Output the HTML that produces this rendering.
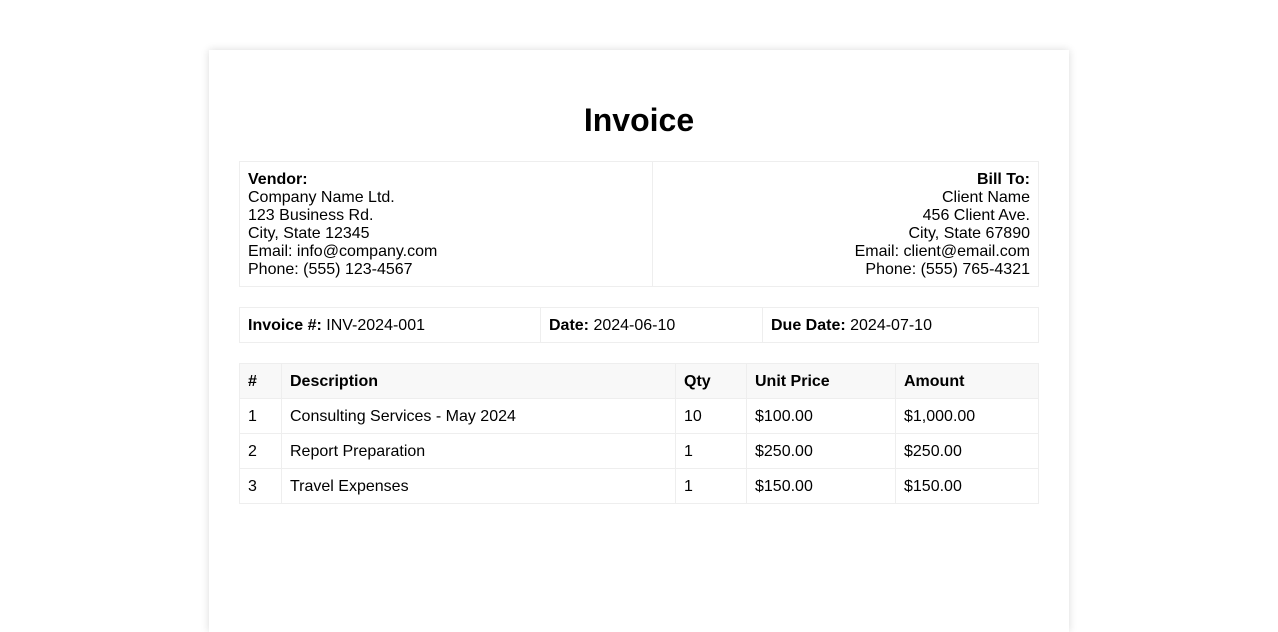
<!DOCTYPE html>
<html><head><meta charset="utf-8"><style>
html,body{margin:0;height:501px;overflow:hidden;}
body{background:#fff;font-family:"Liberation Sans",Arial,sans-serif;font-size:16px;color:#000;}
.card{position:absolute;left:209px;top:50px;width:800px;padding:52px 30px 30px;background:#fff;box-shadow:0 0 8px rgba(0,0,0,0.15);height:500px;}
h1{margin:0 0 22px;text-align:center;font-size:32px;line-height:37px;}
table{border-collapse:collapse;width:800px;line-height:18px;}
td,th{border:1px solid #eee;padding:9px 8px 7px;text-align:left;vertical-align:top;}
.meta{margin-top:20px;}
.items{margin-top:20px;}
.items th{background:#f8f8f8;font-weight:bold;}
</style></head><body>
<div class="card">
<h1>Invoice</h1>
<table><tr>
<td style="width:396px"><b>Vendor:</b><br>Company Name Ltd.<br>123 Business Rd.<br>City, State 12345<br>Email: info@company.com<br>Phone: (555) 123-4567</td>
<td style="text-align:right"><b>Bill To:</b><br>Client Name<br>456 Client Ave.<br>City, State 67890<br>Email: client@email.com<br>Phone: (555) 765-4321</td>
</tr></table>
<table class="meta"><tr>
<td style="width:284px"><b>Invoice #:</b> INV-2024-001</td>
<td style="width:205px"><b>Date:</b> 2024-06-10</td>
<td><b>Due Date:</b> 2024-07-10</td>
</tr></table>
<table class="items">
<tr><th style="width:25px">#</th><th style="width:377px">Description</th><th style="width:54px">Qty</th><th style="width:132px">Unit Price</th><th>Amount</th></tr>
<tr><td>1</td><td>Consulting Services - May 2024</td><td>10</td><td>$100.00</td><td>$1,000.00</td></tr>
<tr><td>2</td><td>Report Preparation</td><td>1</td><td>$250.00</td><td>$250.00</td></tr>
<tr><td>3</td><td>Travel Expenses</td><td>1</td><td>$150.00</td><td>$150.00</td></tr>
</table>
</div>
</body></html>
